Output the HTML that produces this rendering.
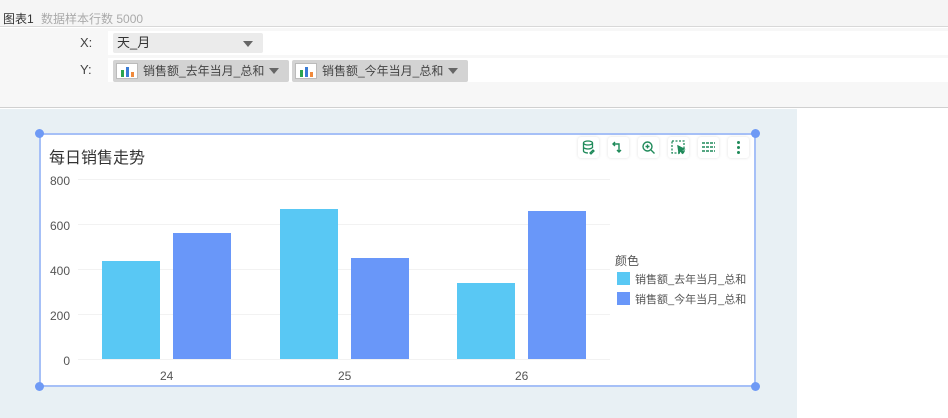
<!DOCTYPE html>
<html><head><meta charset="utf-8"><style>
*{margin:0;padding:0;box-sizing:border-box}
body{width:948px;height:418px;overflow:hidden;background:#fff;font-family:"Liberation Sans","Noto Sans CJK SC",sans-serif;position:relative}
.abs{position:absolute}
.t{font-size:12px;color:#333;white-space:nowrap}
.pill{position:absolute;height:22px;background:#d3d3d3;border-radius:2px;font-size:12px;color:#444;line-height:22px;white-space:nowrap}
.ic{position:absolute;top:3px;left:3px;width:22px;height:16px;background:#fff;border:1px solid #bbb}
.tri{position:absolute;width:0;height:0;border-left:5px solid transparent;border-right:5px solid transparent;border-top:6px solid #666}
.btn{position:absolute;top:137px;width:21px;height:21px;background:#fff;border-radius:3px;box-shadow:0 0 3px rgba(0,0,0,.12)}
.h{position:absolute;width:9px;height:9px;border-radius:50%;background:#6f9af5}
.yl{position:absolute;left:40px;width:30px;text-align:right;font-size:12px;color:#555}
.bar{position:absolute}
.c1{background:#59c8f4}.c2{background:#6997f9}
.gl{position:absolute;left:78px;width:532px;height:1px;background:#f2f2f2}
</style></head><body>
<div class="abs" style="left:0;top:0;width:948px;height:27px;background:#f5f5f5;border-bottom:1px solid #d8d8d8"></div>
<div class="abs t" style="left:3px;top:10px;font-size:12px;color:#333">图表1 <span style="color:#aaa;margin-left:4px">数据样本行数 5000</span></div>
<div class="abs" style="left:0;top:28px;width:948px;height:80px;background:#f7f7f7;border-bottom:1px solid #d0d0d0"></div>
<div class="abs" style="left:108px;top:31px;width:840px;height:24px;background:#fff"></div>
<div class="abs" style="left:108px;top:58px;width:840px;height:24px;background:#fff"></div>
<div class="abs t" style="left:80px;top:35px;font-size:13px;color:#444">X:</div>
<div class="abs t" style="left:80px;top:62px;font-size:13px;color:#444">Y:</div>
<div class="abs" style="left:113px;top:33px;width:150px;height:20px;background:#ebebeb;border-radius:2px;font-size:13px;color:#333;line-height:20px;padding-left:4px">天_月</div>
<div class="tri" style="left:243px;top:41px"></div>
<div class="pill" style="left:113px;top:60px;width:176px"><div class="ic"><svg width="20" height="14"><rect x="4" y="5" width="3" height="7" fill="#2aa44f"/><rect x="9" y="2" width="3" height="10" fill="#3a7bd5"/><rect x="14" y="7" width="3" height="5" fill="#f08a3c"/></svg></div><span style="position:absolute;left:30px">销售额_去年当月_总和</span><div class="tri" style="left:156px;top:8px"></div></div>
<div class="pill" style="left:292px;top:60px;width:176px"><div class="ic"><svg width="20" height="14"><rect x="4" y="5" width="3" height="7" fill="#2aa44f"/><rect x="9" y="2" width="3" height="10" fill="#3a7bd5"/><rect x="14" y="7" width="3" height="5" fill="#f08a3c"/></svg></div><span style="position:absolute;left:30px">销售额_今年当月_总和</span><div class="tri" style="left:156px;top:8px"></div></div>
<div class="abs" style="left:0;top:109px;width:797px;height:309px;background:#e8f0f4"></div>
<div class="abs" style="left:39px;top:133px;width:717px;height:254px;background:#fff;border:2px solid #a6c0f7"></div>
<div class="h" style="left:35px;top:129px"></div><div class="h" style="left:751px;top:129px"></div>
<div class="h" style="left:35px;top:382px"></div><div class="h" style="left:751px;top:382px"></div>
<div class="abs" style="left:49px;top:144px;font-size:16px;color:#333">每日销售走势</div>
<div class="btn" style="left:578px"><svg width="21" height="21" fill="none" stroke="#1f8a5a" stroke-width="1.3"><ellipse cx="10" cy="6" rx="4.5" ry="2"/><path d="M5.5 6v8c0 1 2 2 4.5 2M14.5 6v5M5.5 10c0 1 2 2 4.5 2s4.5-1 4.5-2"/><path d="M12 16l3-3 1 1-3 3z"/></svg></div>
<div class="btn" style="left:608px"><svg width="21" height="21" fill="none" stroke="#1f8a5a" stroke-width="1.4"><path d="M7 5l-2 2 2 2M5 7h6v8M9 13l2 2 2-2"/></svg></div>
<div class="btn" style="left:638px"><svg width="21" height="21" fill="none" stroke="#1f8a5a" stroke-width="1.4"><circle cx="9.5" cy="9.5" r="4.5"/><path d="M13 13l3.5 3.5M7.5 9.5h4M9.5 7.5v4"/></svg></div>
<div class="btn" style="left:668px"><svg width="21" height="21" fill="none" stroke="#1f8a5a" stroke-width="1.3"><rect x="4" y="4" width="12" height="12" stroke-dasharray="2 1.5"/><path d="M10 9l6 3-2.5 1 2 2.5-1 .8-2-2.5-1.5 2z" fill="#1f8a5a"/></svg></div>
<div class="btn" style="left:698px"><svg width="21" height="21" stroke="#1f8a5a" stroke-width="1.6"><path d="M4 6h13M4 10h13M4 14h13" stroke-dasharray="3 1"/></svg></div>
<div class="btn" style="left:728px"><svg width="21" height="21" fill="#1f8a5a"><circle cx="10.5" cy="5.5" r="1.5"/><circle cx="10.5" cy="10.5" r="1.5"/><circle cx="10.5" cy="15.5" r="1.5"/></svg></div>
<div class="gl" style="top:179px"></div><div class="gl" style="top:224px"></div><div class="gl" style="top:269px"></div><div class="gl" style="top:314px"></div><div class="gl" style="top:359px"></div>
<div class="yl" style="top:174px">800</div><div class="yl" style="top:219px">600</div><div class="yl" style="top:264px">400</div><div class="yl" style="top:309px">200</div><div class="yl" style="top:354px">0</div>
<div class="bar c1" style="left:102px;top:261px;width:58px;height:98px"></div>
<div class="bar c2" style="left:173px;top:233px;width:58px;height:126px"></div>
<div class="bar c1" style="left:280px;top:209px;width:58px;height:150px"></div>
<div class="bar c2" style="left:351px;top:258px;width:58px;height:101px"></div>
<div class="bar c1" style="left:457px;top:283px;width:58px;height:76px"></div>
<div class="bar c2" style="left:528px;top:211px;width:58px;height:148px"></div>
<div class="abs" style="left:160px;top:369px;font-size:12px;color:#555">24</div>
<div class="abs" style="left:338px;top:369px;font-size:12px;color:#555">25</div>
<div class="abs" style="left:515px;top:369px;font-size:12px;color:#555">26</div>
<div class="abs" style="left:615px;top:252px;font-size:12px;color:#555">颜色</div>
<div class="abs c1" style="left:617px;top:272px;width:13px;height:13px"></div>
<div class="abs" style="left:635px;top:271px;font-size:11px;color:#555">销售额_去年当月_总和</div>
<div class="abs c2" style="left:617px;top:292px;width:13px;height:13px"></div>
<div class="abs" style="left:635px;top:291px;font-size:11px;color:#555">销售额_今年当月_总和</div>
</body></html>
